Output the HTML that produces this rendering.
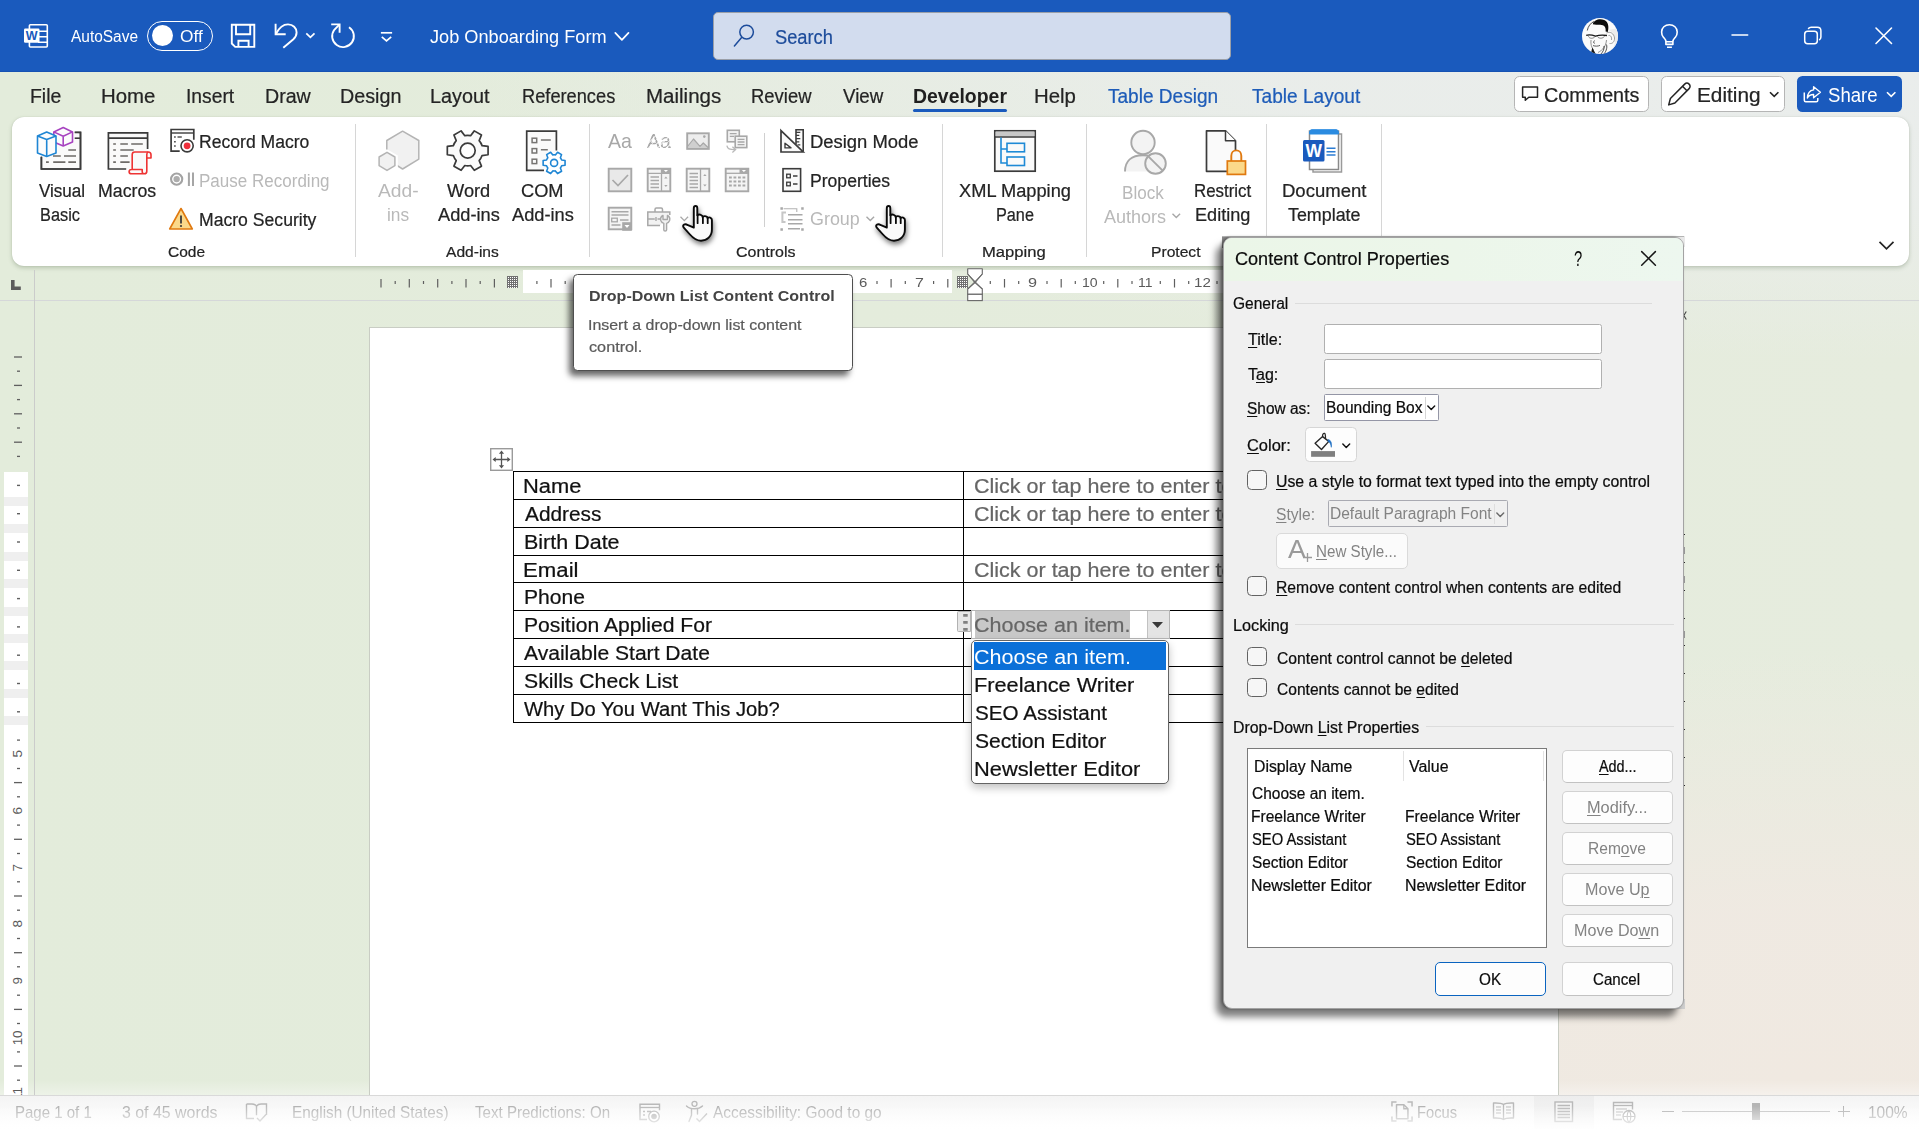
<!DOCTYPE html><html lang="en"><head><meta charset="utf-8"><title>Job Onboarding Form - Word</title><style>
html,body{margin:0;padding:0;}
body{width:1919px;height:1129px;overflow:hidden;position:relative;
 font-family:"Liberation Sans",sans-serif;background:#e4ecdc;}
#root{position:absolute;left:0;top:0;width:1919px;height:1129px;overflow:hidden;}
#root div,#root svg,#root span.t{position:absolute;}
#root div{box-sizing:border-box;}
span.t{white-space:nowrap;transform-origin:0 50%;-webkit-text-stroke:0.22px currentColor;}
u{text-decoration:underline;text-decoration-thickness:1px;text-underline-offset:1.5px;}
</style></head><body><div id="root">
<div style="left:0;top:0;width:1919px;height:1129px;background:linear-gradient(180deg,rgba(255,255,255,0) 0,rgba(255,255,255,0) 1080px,rgba(255,255,255,0.380) 1096px),radial-gradient(ellipse 1500px 300px at 1919px 60px,rgba(234,237,236,1) 0%,rgba(234,237,236,0.85) 45%,rgba(234,237,236,0) 100%),radial-gradient(ellipse 800px 430px at 1800px 1080px,#f0e9e1 0%,rgba(240,233,226,0.9) 40%,rgba(240,233,226,0) 100%),linear-gradient(90deg,#e3ecdb 0%,#e4ecdc 45%,#e6ecde 100%);"></div>
<div style="left:0px;top:0px;width:1919px;height:72px;background:#1a5abd;"></div>
<div style="left:0px;top:71px;width:1919px;height:1px;background:#1652b3;"></div>
<svg style="left:22px;top:22px;" width="30" height="30" viewBox="22 22 30 30" fill="none">
<rect x="29.400" y="24.800" width="17.900" height="22.200" rx="1" stroke="#fff" stroke-width="1.600"/>
<path d="M38 31.300H47.300M38 36.800H47.300M38 42.300H47.300" stroke="#fff" stroke-width="1.500"/>
<rect x="24" y="28.600" width="15.500" height="14.200" rx="1.200" fill="#fff"/>
<text x="31.750" y="40.200" font-family="Liberation Sans, sans-serif" font-weight="700" font-size="12.500" text-anchor="middle" fill="#1a5abd">W</text>
</svg>
<span class="t" style="left:71.0px;top:26.00px;font-size:16px;line-height:21px;color:#fff;transform:scaleX(0.9655);-webkit-text-stroke:0;">AutoSave</span>
<div style="left:146.8px;top:20.9px;width:66.4px;height:30.1px;border:1.500px solid #fff;border-radius:15.100px;"></div>
<div style="left:151.7px;top:24.8px;width:21.4px;height:21.4px;background:#fff;border-radius:50%;"></div>
<span class="t" style="left:180.19px;top:26.00px;font-size:16px;line-height:21px;color:#fff;transform:scaleX(1.0810);-webkit-text-stroke:0;">Off</span>
<svg style="left:228px;top:20px;" width="32" height="32" viewBox="228 20 32 32" fill="none">
<path d="M231.800 24.800H254.300V46.900H235.200L231.800 43.500z" stroke="#fff" stroke-width="1.900" stroke-linejoin="miter"/>
<path d="M236 24.800V34.200H250.200V24.800" stroke="#fff" stroke-width="1.900"/>
<path d="M238.400 46.900V40.700H248.600V46.900" stroke="#fff" stroke-width="1.900"/>
</svg>
<svg style="left:270px;top:18px;" width="32" height="34" viewBox="270 18 32 34" fill="none">
<path d="M275.600 23.800V34.200H285.700" stroke="#fff" stroke-width="1.900" fill="none"/>
<path d="M276 33.800C279 28 283.500 24.400 288 24.400c5 0 8.600 3.600 8.600 8.100 0 3-1.400 5.100-3.500 7L283.300 47.800" stroke="#fff" stroke-width="1.900" fill="none"/>
</svg>
<svg style="left:303px;top:30px;" width="15" height="11" viewBox="303 30 15 11" fill="none"><path d="M306.300 33.300l4.100 4.100 4.100-4.100" stroke="#fff" stroke-width="1.700" fill="none"/></svg>
<svg style="left:326px;top:18px;" width="34" height="34" viewBox="326 18 34 34" fill="none">
<path d="M331.200 24.400H339.600V32.800" stroke="#fff" stroke-width="1.900" fill="none"/>
<path d="M339.300 24.700L334.300 29.800A10.850 10.850 0 1 0 349 27.200" stroke="#fff" stroke-width="1.900" fill="none"/>
</svg>
<svg style="left:377px;top:28px;" width="19" height="17" viewBox="377 28 19 17" fill="none"><path d="M380.900 32.800H392.100" stroke="#fff" stroke-width="1.700"/><path d="M381.800 36.800l4.700 4 4.700-4" stroke="#fff" stroke-width="1.700" fill="none"/></svg>
<span class="t" style="left:429.52px;top:24.00px;font-size:19px;line-height:25px;color:#fff;transform:scaleX(0.9557);-webkit-text-stroke:0;">Job Onboarding Form</span>
<svg style="left:612px;top:29px;" width="20" height="16" viewBox="612 29 20 16" fill="none"><path d="M615.300 32.800L621.900 39.800L628.500 32.800" stroke="#fff" stroke-width="1.700" fill="none" stroke-linecap="round" stroke-linejoin="round"/></svg>
<div style="left:713px;top:12px;width:518px;height:48px;background:#d2dcee;border:1px solid #9a9fa8;border-radius:5px;"></div>
<svg style="left:731px;top:22px;" width="27" height="28" viewBox="731 22 27 28" fill="none"><circle cx="746.600" cy="32.100" r="6.800" stroke="#1d4c9b" stroke-width="1.500"/><path d="M741.800 37.200L734.400 46" stroke="#1d4c9b" stroke-width="1.500" stroke-linecap="round"/></svg>
<span class="t" style="left:775.33px;top:25.00px;font-size:19.5px;line-height:25px;color:#1d4c9b;transform:scaleX(0.9371);">Search</span>
<svg style="left:1580px;top:16px;" width="40" height="40" viewBox="1580 16 40 40" fill="none">
<defs><clipPath id="av"><circle cx="1600" cy="36.100" r="18"/></clipPath></defs>
<circle cx="1600" cy="36.100" r="18" fill="#fbfbfb"/>
<g clip-path="url(#av)">
<path d="M1608 30C1612 31 1615.500 35 1615 42C1614.500 47 1611 51 1607 54L1619 50V28z" fill="#ececec"/>
<path d="M1592.800 24.300C1593.800 19.600 1600 18.300 1604.200 20C1608.200 21.700 1609.200 26.500 1607.800 32L1605.600 31.400C1606.200 27.200 1604.200 24.800 1600.200 24.700C1597.200 24.600 1595 25 1592.800 24.300z" fill="#0c0c0c"/>
<path d="M1587.300 30.500C1588 26.500 1590.500 23 1594 21.500" stroke="#222" stroke-width="0.800" fill="none"/>
<path d="M1586.200 35.300C1589 34.300 1592 34.800 1595.500 36.200C1599 35 1603 34.900 1607 35.500" stroke="#1a1a1a" stroke-width="1.300" fill="none"/>
<path d="M1588.500 36.300C1589 38.600 1593 39 1594.800 36.800M1597.500 36.500C1598.500 38.800 1603 38.800 1604.500 36.300" stroke="#555" stroke-width="0.700" fill="none"/>
<path d="M1606.500 33C1610 31 1614 33.500 1614.500 38C1614.800 41.500 1612.500 44 1609.500 43.500M1608.500 35.500C1610.500 35 1612 37 1611.500 40" stroke="#777" stroke-width="0.700" fill="none"/>
<path d="M1594.500 40.500C1593.500 42 1593 43 1594.800 43.300M1593 45.600C1595.500 46.400 1598 46.300 1600 45.400" stroke="#333" stroke-width="0.800" fill="none"/>
<path d="M1606.500 40C1606 46 1603 50 1598 52.500M1591 40C1590.500 44 1591.500 47.500 1593.500 50" stroke="#666" stroke-width="0.700" fill="none"/>
<path d="M1592.300 47.500L1596 54.500L1591 53z" fill="#151515"/>
<path d="M1606.500 44.500C1607.500 48 1606 52 1603 55M1604 46C1604.500 49 1603 52 1600.500 54.500" stroke="#222" stroke-width="0.800" fill="none"/>
</g>
</svg>
<svg style="left:1657px;top:21px;" width="25" height="30" viewBox="1657 21 25 30" fill="none">
<path d="M1665.900 44.400V41.500C1665.900 39.500 1664.600 38.600 1663.400 37.200C1662 35.600 1661.600 33.800 1661.600 31.900C1661.600 27.800 1665 24.700 1669.400 24.700C1673.800 24.700 1677.200 27.800 1677.200 31.900C1677.200 33.800 1676.800 35.600 1675.400 37.200C1674.200 38.600 1672.900 39.500 1672.900 41.500V44.400z" stroke="#fff" stroke-width="1.600" stroke-linejoin="round"/>
<path d="M1665.900 41.700H1672.900M1667 47.300H1671.900" stroke="#fff" stroke-width="1.500"/>
</svg>
<svg style="left:1730.2px;top:30px;" width="20" height="10" viewBox="0 0 20 10" fill="none"><path d="M2 5h15.700" stroke="#fff" stroke-width="1.5" stroke-linecap="round"/></svg>
<svg style="left:1801.5px;top:24.9px;" width="22" height="22" viewBox="0 0 22 22" fill="none"><rect x="2.700" y="6.200" width="12.600" height="12.600" rx="3" stroke="#fff" stroke-width="1.500"/><path d="M6.500 3.500c.700-1 1.600-1.300 2.600-1.300h6.200c2.200 0 3.600 1.500 3.600 3.600V12c0 1.100-.400 2-1.300 2.600" stroke="#fff" stroke-width="1.500" stroke-linecap="round" fill="none"/></svg>
<svg style="left:1873.4px;top:25.2px;" width="22" height="22" viewBox="0 0 22 22" fill="none"><path d="M3 3l15.500 15.500M18.500 3L3 18.500" stroke="#fff" stroke-width="1.600" stroke-linecap="round"/></svg>
<span class="t" style="left:30.23px;top:84.00px;font-size:19.5px;line-height:25px;color:#242424;transform:scaleX(0.9963);">File</span>
<span class="t" style="left:100.91px;top:84.00px;font-size:19.5px;line-height:25px;color:#242424;transform:scaleX(1.0462);">Home</span>
<span class="t" style="left:185.99px;top:84.00px;font-size:19.5px;line-height:25px;color:#242424;transform:scaleX(0.9881);">Insert</span>
<span class="t" style="left:264.72px;top:84.00px;font-size:19.5px;line-height:25px;color:#242424;transform:scaleX(1.0064);">Draw</span>
<span class="t" style="left:340.21px;top:84.00px;font-size:19.5px;line-height:25px;color:#242424;transform:scaleX(1.0115);">Design</span>
<span class="t" style="left:429.7px;top:84.00px;font-size:19.5px;line-height:25px;color:#242424;transform:scaleX(1.0159);">Layout</span>
<span class="t" style="left:522.33px;top:84.00px;font-size:19.5px;line-height:25px;color:#242424;transform:scaleX(0.9351);">References</span>
<span class="t" style="left:645.9px;top:84.00px;font-size:19.5px;line-height:25px;color:#242424;transform:scaleX(1.0520);">Mailings</span>
<span class="t" style="left:751.06px;top:84.00px;font-size:19.5px;line-height:25px;color:#242424;transform:scaleX(0.9457);">Review</span>
<span class="t" style="left:843.25px;top:84.00px;font-size:19.5px;line-height:25px;color:#242424;transform:scaleX(0.9608);">View</span>
<span class="t" style="left:912.54px;top:84.00px;font-size:19.5px;line-height:25px;color:#1f1f1f;font-weight:700;-webkit-text-stroke:0;transform:scaleX(0.9968);">Developer</span>
<div style="left:913px;top:108.5px;width:94px;height:3px;background:#1a5abd;border-radius:1.500px;"></div>
<span class="t" style="left:1033.91px;top:84.00px;font-size:19.5px;line-height:25px;color:#242424;transform:scaleX(1.0452);">Help</span>
<span class="t" style="left:1108.45px;top:84.00px;font-size:19.5px;line-height:25px;color:#1e5cb8;transform:scaleX(0.9768);">Table Design</span>
<span class="t" style="left:1252.2px;top:84.00px;font-size:19.5px;line-height:25px;color:#1e5cb8;transform:scaleX(0.9788);">Table Layout</span>
<div style="left:1514.2px;top:76px;width:134.5px;height:35.8px;background:#fff;border:1px solid #b5b5b5;border-radius:5.500px;"></div>
<svg style="left:1519px;top:83px;" width="23" height="21" viewBox="1519 83 23 21" fill="none"><path d="M1522.600 87H1537.500V97.200H1528.800L1525.300 100.300V97.200H1522.600z" stroke="#242424" stroke-width="1.500" stroke-linejoin="round"/></svg>
<span class="t" style="left:1544.47px;top:83.00px;font-size:19.5px;line-height:25px;color:#242424;transform:scaleX(1.0124);">Comments</span>
<div style="left:1661px;top:76px;width:124.2px;height:35.8px;background:#fff;border:1px solid #b5b5b5;border-radius:5.500px;"></div>
<svg style="left:1665px;top:79px;" width="30" height="30" viewBox="1665 79 30 30" fill="none"><path d="M1668.700 104.900L1670.400 98.500L1684.700 84.100C1685.900 82.900 1687.900 82.900 1689.100 84.100C1690.400 85.400 1690.400 87.300 1689.100 88.600L1674.900 103z" stroke="#242424" stroke-width="1.500" stroke-linejoin="round"/><path d="M1682.500 86.300L1687 90.800" stroke="#242424" stroke-width="1.500"/></svg>
<span class="t" style="left:1697.08px;top:83.00px;font-size:19.5px;line-height:25px;color:#242424;transform:scaleX(1.0666);">Editing</span>
<svg style="left:1767px;top:89px;" width="15" height="11" viewBox="1767 89 15 11" fill="none"><path d="M1770 92.200l4.200 4.200 4.200-4.200" stroke="#242424" stroke-width="1.600" fill="none"/></svg>
<div style="left:1797px;top:76px;width:104.8px;height:35.8px;background:#1a5abd;border-radius:5.500px;"></div>
<svg style="left:1801px;top:83px;" width="23" height="22" viewBox="1801 83 23 22" fill="none"><path d="M1804.300 92.500V100.300Q1804.300 101.800 1805.800 101.800H1816.300Q1817.800 101.800 1817.800 100.300V98" stroke="#fff" stroke-width="1.500" fill="none"/><path d="M1813.600 86.700L1820.400 92.200L1813.600 97.700V94.500C1810.600 94.500 1808.600 95.600 1807.400 98C1807.600 93.600 1809.900 90.400 1813.600 89.900z" stroke="#fff" stroke-width="1.400" stroke-linejoin="round"/></svg>
<span class="t" style="left:1828.02px;top:83.00px;font-size:19.5px;line-height:25px;color:#fff;transform:scaleX(0.9519);-webkit-text-stroke:0;">Share</span>
<svg style="left:1884px;top:89px;" width="15" height="11" viewBox="1884 89 15 11" fill="none"><path d="M1887 92.200l4.200 4.200 4.200-4.200" stroke="#fff" stroke-width="1.600" fill="none"/></svg>
<div style="left:12px;top:117px;width:1896.5px;height:149px;background:#fff;border-radius:12px;box-shadow:0 2px 4px rgba(80,100,70,0.28),0 0 1px rgba(80,100,70,0.25);"></div>
<svg style="left:34px;top:124px;" width="52" height="50" viewBox="34 124 52 50" fill="none">
<path d="M74.700 132.400H80.500V169H41.400V156.500" stroke="#3b3b3b" stroke-width="1.500" fill="#fafafa"/>
<path d="M41.400 156.500L56 150V132.400H80.500" stroke="none" fill="#fafafa"/>
<path d="M74.700 132.400H80.500V169H41.400V156.900" stroke="#3b3b3b" stroke-width="1.700" fill="none"/>
<path d="M74.700 138.200H80.500" stroke="#3b3b3b" stroke-width="1.600"/>
<path d="M68.300 150H76M53 156H60.800M64 156H76M46 162.100H48.800M53.200 162.100H65.400M68.300 162.100H76" stroke="#6e6b68" stroke-width="1.700"/>
<path d="M63.200 127.600L72.500 131.900V142L63.200 145.900L53.800 142V131.900z" fill="#fcfcfc" stroke="#a743c0" stroke-width="1.600" stroke-linejoin="round"/>
<path d="M53.800 131.900L63.200 136.300L72.500 131.900M63.200 136.300V145.900" stroke="#a743c0" stroke-width="1.600" stroke-linejoin="round" fill="none"/>
<path d="M46.700 132L56 136.100V153L46.700 156.400L37.500 153V136.100z" fill="#fcfcfc" stroke="#1f86d4" stroke-width="1.600" stroke-linejoin="round"/>
<path d="M37.500 136.100L46.700 139.400L56 136.100M46.700 139.400V156.400" stroke="#1f86d4" stroke-width="1.600" stroke-linejoin="round" fill="none"/>
</svg>
<span class="t" style="left:38.5px;top:180.00px;font-size:18px;line-height:23px;color:#242424;transform:scaleX(0.9471);">Visual</span>
<span class="t" style="left:40.32px;top:204.00px;font-size:18px;line-height:23px;color:#242424;transform:scaleX(0.9072);">Basic</span>
<svg style="left:104px;top:128px;" width="52" height="50" viewBox="104 128 52 50" fill="none">
<rect x="108.400" y="132.800" width="39.200" height="36.200" fill="#fafafa" stroke="none"/>
<path d="M126.200 169H108.400V132.800H147.600V149.100" stroke="#3b3b3b" stroke-width="1.700" fill="none"/>
<path d="M108.400 138.200H147.600" stroke="#3b3b3b" stroke-width="1.700"/>
<path d="M113.200 144H115.900M120.300 144H127.900M131.200 144H142.800M113.200 150H115.900M120.300 150H133.700M113.200 156H115.900M120.300 156H127.900M113.200 162.100H115.900M120.300 162.100H129.600" stroke="#6e6b68" stroke-width="1.700"/>
<path d="M132.200 169.500V154.600C132.200 152.900 133.200 152 134.800 152H148.200C150 152 151 153 151 154.800V158H146.800" fill="#fafafa" stroke="none"/>
<path d="M132.200 169.500V154.600C132.200 152.900 133.200 152 134.800 152H148.200C150 152 151 153 151 154.800V158H146.800V171.200C146.800 172.900 145.800 173.800 144.300 173.800H131.600C130 173.800 129.100 172.900 129.100 171.700C129.100 170.400 130 169.500 131.600 169.500H142.200V171.500C142.200 173 143.200 173.800 144.300 173.800" fill="#fafafa" stroke="#ee3333" stroke-width="1.600" stroke-linejoin="round"/>
<path d="M146.800 158V154.500C146.800 153 147.300 152.300 148.200 152" stroke="#ee3333" stroke-width="1.600" fill="none"/>
</svg>
<span class="t" style="left:98.41px;top:180.00px;font-size:18px;line-height:23px;color:#242424;transform:scaleX(0.9853);">Macros</span>
<svg style="left:169px;top:127px;" width="27" height="27" viewBox="0 0 27 27" fill="none">
<path d="M10.700 24.100H2.100V2.500h22.700V12.700" stroke="#3b3b3b" stroke-width="1.700" fill="none"/>
<path d="M2.100 6h22.700" stroke="#3b3b3b" stroke-width="1.400"/>
<path d="M5 10h1.800M8.500 10h4.300M5 14.800h1.800M5 19h1.800" stroke="#555" stroke-width="1.500"/>
<circle cx="18.100" cy="18.800" r="6.100" fill="#fff" stroke="#3b3b3b" stroke-width="1.600"/>
<circle cx="18.100" cy="18.800" r="3.400" fill="#ee2f3c"/>
</svg>
<span class="t" style="left:199.33px;top:131.00px;font-size:18px;line-height:23px;color:#242424;transform:scaleX(0.9766);">Record Macro</span>
<svg style="left:168px;top:170px;" width="28" height="18" viewBox="168 170 28 18" fill="none">
<circle cx="176.650" cy="179.100" r="5.600" stroke="#a3a3a3" stroke-width="2.100"/>
<circle cx="176.650" cy="179.100" r="3.200" fill="#adadad"/>
<path d="M188.900 172.600V185.900M193 172.600V185.900" stroke="#a6a6a6" stroke-width="2"/>
</svg>
<span class="t" style="left:199.37px;top:170.00px;font-size:18px;line-height:23px;color:#b9b9b9;transform:scaleX(0.9457);-webkit-text-stroke:0;">Pause Recording</span>
<svg style="left:168px;top:206px;" width="26" height="25" viewBox="0 0 26 25" fill="none">
<path d="M13 2.500L24.300 23H1.700z" fill="#fbd98a" stroke="#e0790f" stroke-width="1.600" stroke-linejoin="round"/>
<path d="M13 9.500v8" stroke="#3b3b3b" stroke-width="1.800"/>
<circle cx="13" cy="20" r="1.100" fill="#3b3b3b"/>
</svg>
<span class="t" style="left:199.32px;top:209.00px;font-size:18px;line-height:23px;color:#242424;transform:scaleX(0.9779);">Macro Security</span>
<span class="t" style="left:167.55px;top:242.00px;font-size:15.5px;line-height:20px;color:#242424;transform:scaleX(1.0022);">Code</span>
<div style="left:355px;top:124px;width:1px;height:133px;background:#d6d6d6;"></div>
<svg style="left:374px;top:126px;" width="50" height="50" viewBox="374 126 50 50" fill="none">
<path d="M402.600 131.200L418.800 140.500V159.200L402.600 169L386.800 159.200V140.500z" fill="#f1f1f1" stroke="#b4b4b4" stroke-width="1.500" stroke-linejoin="round"/>
<path d="M387 150.100L397.100 155.900V166.800L387 172.600L376.900 166.800V155.900z" fill="#fff" stroke="#fff" stroke-width="1.500"/>
<path d="M387 152.300L394.900 157V165.700L387 170.400L379.100 165.700V157z" fill="#f1f1f1" stroke="#b4b4b4" stroke-width="1.500" stroke-linejoin="round"/>
</svg>
<span class="t" style="left:378.0px;top:180.00px;font-size:18px;line-height:23px;color:#b9b9b9;transform:scaleX(1.0703);-webkit-text-stroke:0;">Add-</span>
<span class="t" style="left:387.42px;top:204.00px;font-size:18px;line-height:23px;color:#b9b9b9;transform:scaleX(0.9614);-webkit-text-stroke:0;">ins</span>
<svg style="left:444px;top:126px;" width="48" height="50" viewBox="444 126 48 50" fill="none"><path d="M482.07 145.65L488.08 146.45L488.08 154.75L482.07 155.55A15.2 15.2 0 0 1 479.17 160.57L481.48 166.18L474.30 170.33L470.60 165.52A15.2 15.2 0 0 1 464.80 165.52L461.10 170.33L453.92 166.18L456.23 160.57A15.2 15.2 0 0 1 453.33 155.55L447.32 154.75L447.32 146.45L453.33 145.65A15.2 15.2 0 0 1 456.23 140.63L453.92 135.02L461.10 130.87L464.80 135.68A15.2 15.2 0 0 1 470.60 135.68L474.30 130.87L481.48 135.02L479.17 140.63A15.2 15.2 0 0 1 482.07 145.65z" fill="#fafafa" stroke="#3b3b3b" stroke-width="1.7" stroke-linejoin="round"/><circle cx="467.7" cy="150.6" r="7.5" fill="#fff" stroke="#3b3b3b" stroke-width="1.7"/></svg>
<span class="t" style="left:446.6px;top:180.00px;font-size:18px;line-height:23px;color:#242424;transform:scaleX(1.0127);">Word</span>
<span class="t" style="left:437.8px;top:204.00px;font-size:18px;line-height:23px;color:#242424;transform:scaleX(1.0121);">Add-ins</span>
<svg style="left:522px;top:126px;" width="48" height="52" viewBox="522 126 48 52" fill="none">
<path d="M556.400 150.600V131.200H526.700V170.400H544" stroke="#3b3b3b" stroke-width="1.700" fill="#fafafa"/>
<rect x="532.100" y="138.200" width="4.600" height="4.400" stroke="#767472" stroke-width="1.500"/>
<rect x="532.100" y="148.600" width="4.600" height="4.400" stroke="#767472" stroke-width="1.500"/>
<rect x="532.100" y="159.200" width="4.600" height="4.400" stroke="#767472" stroke-width="1.500"/>
<path d="M540.900 139.900H550.800M540.900 149.800H547.800" stroke="#767472" stroke-width="1.500"/>
<path d="M561.66 160.00L565.06 160.57L565.06 165.23L561.66 165.80A8.1 8.1 0 0 1 560.39 168.00L561.59 171.22L557.56 173.55L555.37 170.90A8.1 8.1 0 0 1 552.83 170.90L550.64 173.55L546.61 171.22L547.81 168.00A8.1 8.1 0 0 1 546.54 165.80L543.14 165.23L543.14 160.57L546.54 160.00A8.1 8.1 0 0 1 547.81 157.80L546.61 154.58L550.64 152.25L552.83 154.90A8.1 8.1 0 0 1 555.37 154.90L557.56 152.25L561.59 154.58L560.39 157.80A8.1 8.1 0 0 1 561.66 160.00z" fill="#fff" stroke="#1f86d4" stroke-width="1.6" stroke-linejoin="round"/><circle cx="554.1" cy="162.9" r="3.5" fill="#fff" stroke="#1f86d4" stroke-width="1.6"/></svg>
<span class="t" style="left:521.15px;top:180.00px;font-size:18px;line-height:23px;color:#242424;transform:scaleX(1.0116);">COM</span>
<span class="t" style="left:511.7px;top:204.00px;font-size:18px;line-height:23px;color:#242424;transform:scaleX(1.0137);">Add-ins</span>
<span class="t" style="left:445.7px;top:242.00px;font-size:15.5px;line-height:20px;color:#242424;transform:scaleX(1.0047);">Add-ins</span>
<div style="left:589px;top:124px;width:1px;height:133px;background:#d6d6d6;"></div>
<span class="t" style="left:608.4px;top:127.00px;font-size:20.8px;line-height:27px;color:#a8a8a8;transform:scaleX(0.9385);-webkit-text-stroke:0;">Aa</span>
<span class="t" style="left:647.0px;top:127.00px;font-size:20.8px;line-height:27px;color:#a8a8a8;transform:scaleX(0.9385);-webkit-text-stroke:0;">Aa</span>
<div style="left:646px;top:132px;width:26px;height:18px;background:repeating-linear-gradient(135deg,rgba(255,255,255,0) 0 2.200px,rgba(255,255,255,0.600) 2.200px 3.300px);"></div>
<svg style="left:684px;top:130px;" width="28" height="22" viewBox="684 130 28 22" fill="none">
<rect x="687.200" y="133.300" width="21.600" height="15.600" fill="#ededed" stroke="#a8a8a8" stroke-width="1.900"/>
<path d="M687.500 146.500L693.500 139L700 146.300L703.300 143L708.300 147.700V148.500H687.500z" fill="#cfcfcf" stroke="#a8a8a8" stroke-width="1.200" stroke-linejoin="round"/>
<circle cx="704.300" cy="136.600" r="1.300" fill="#a8a8a8"/>
</svg>
<svg style="left:723px;top:126px;" width="29" height="30" viewBox="723 126 29 30" fill="none">
<rect x="727.300" y="130.300" width="12" height="11.500" fill="#f2f2f2" stroke="#a8a8a8" stroke-width="1.600"/>
<path d="M729.800 133.600H736.600M729.800 136.400H734" stroke="#a8a8a8" stroke-width="1.300"/>
<rect x="735.200" y="136.200" width="11.600" height="11.400" fill="#f2f2f2" stroke="#a8a8a8" stroke-width="1.600"/>
<path d="M737.600 139.300H744.500M737.600 142H744.500M737.600 144.700H744.500" stroke="#a8a8a8" stroke-width="1.300"/>
<path d="M726.900 145.600C727.400 148.900 729.500 149.600 735 149.600M732.400 146.800L735.600 149.600L732.400 152.400" stroke="#b9b9b9" stroke-width="1.300" fill="none"/>
</svg>
<svg style="left:607px;top:167px;" width="26" height="26" viewBox="0 0 26 26" fill="none">
<rect x="1.700" y="1.700" width="22.600" height="22.600" fill="#e9e9e9" stroke="#a8a8a8" stroke-width="1.900"/>
<path d="M5.500 13l5.500 5.500 10-10.500" stroke="#a8a8a8" stroke-width="1.700" fill="none"/>
</svg>
<svg style="left:646px;top:167px;" width="26" height="26" viewBox="0 0 26 26" fill="none">
<rect x="1.700" y="1.700" width="22.600" height="22.600" fill="#f4f4f4" stroke="#a8a8a8" stroke-width="1.900"/>
<path d="M1.700 6.300h22.600M15.500 1.700v22.600" stroke="#a8a8a8" stroke-width="1.300"/>
<rect x="15.500" y="1.700" width="8.800" height="4.600" fill="#a8a8a8"/>
<path d="M17.800 3l2.100 2 2.100-2z" fill="#fff"/>
<path d="M4.500 10h8.500M4.500 13.500h8.500M4.500 17h8.500M4.500 20.500h8.500" stroke="#a8a8a8" stroke-width="1.300"/>
<path d="M18.200 11.500l1.700-2 1.700 2zM18.200 18l1.700 2 1.700-2z" fill="#a8a8a8"/>
</svg>
<svg style="left:685px;top:167px;" width="26" height="26" viewBox="0 0 26 26" fill="none">
<rect x="1.700" y="1.700" width="22.600" height="22.600" fill="#f4f4f4" stroke="#a8a8a8" stroke-width="1.900"/>
<path d="M15.500 1.700v22.600" stroke="#a8a8a8" stroke-width="1.300"/>
<path d="M4.500 6.500h8.500M4.500 10h8.500M4.500 13.500h8.500M4.500 17h8.500M4.500 20.500h8.500" stroke="#a8a8a8" stroke-width="1.300"/>
<path d="M18.200 9l1.700-2 1.700 2zM18.200 17.500l1.700 2 1.700-2z" fill="#a8a8a8"/>
</svg>
<svg style="left:724px;top:167px;" width="26" height="26" viewBox="0 0 26 26" fill="none">
<rect x="1.700" y="1.700" width="22.600" height="22.600" fill="#f4f4f4" stroke="#a8a8a8" stroke-width="1.900"/>
<path d="M1.700 6.300h22.600" stroke="#a8a8a8" stroke-width="1.300"/>
<rect x="15.500" y="1.700" width="8.800" height="4.600" fill="#a8a8a8"/>
<path d="M17.800 3l2.100 2 2.100-2z" fill="#fff"/>
<path d="M5 10.500h16.500M5 14.500h16.500M5 18.500h16.500" stroke="#a8a8a8" stroke-width="2.200" stroke-dasharray="2.800 1.700"/>
</svg>
<svg style="left:607px;top:206px;" width="26" height="26" viewBox="0 0 26 26" fill="none">
<rect x="1.700" y="1.700" width="22.600" height="21.600" fill="#f4f4f4" stroke="#a8a8a8" stroke-width="1.900"/>
<path d="M4.500 5.800h17M4.500 9h17" stroke="#a8a8a8" stroke-width="1.400"/>
<rect x="4.700" y="12.200" width="5.600" height="3.600" stroke="#a8a8a8" stroke-width="1.300"/>
<path d="M13 14h8.500M4.500 19h9" stroke="#a8a8a8" stroke-width="1.400"/>
<rect x="15.200" y="16.200" width="9.600" height="8.600" fill="#a8a8a8"/>
<path d="M17.500 19l2.500 3 2.500-3z" fill="#fff"/>
</svg>
<svg style="left:646px;top:206px;" width="28" height="26" viewBox="0 0 28 26" fill="none">
<path d="M9 6V3.500c0-.800.600-1.400 1.400-1.400h4.700c.800 0 1.400.600 1.400 1.400V6" stroke="#a8a8a8" stroke-width="1.500" fill="none"/>
<path d="M14 19.500H1.800V6h22v3" stroke="#a8a8a8" stroke-width="1.500" fill="#f2f2f2"/>
<path d="M1.800 13h7M11.500 13h3.500M10 11v4" stroke="#a8a8a8" stroke-width="1.400"/>
<path d="M17 9.500c-2 1-2.800 3-2.200 5 .500 1.500 1.700 2.400 3 2.800V24c0 1.400 2.800 1.400 2.800 0v-6.700c1.400-.400 2.500-1.400 3-2.800.600-2-.200-4-2.200-5v4h-4.400z" fill="#f2f2f2" stroke="#a8a8a8" stroke-width="1.400" stroke-linejoin="round"/>
</svg>
<svg style="left:679px;top:215px;" width="11" height="8" viewBox="0 0 11 8" fill="none"><path d="M1.500 1.800l3.800 3.800 3.800-3.800" stroke="#a8a8a8" stroke-width="1.300" fill="none"/></svg>
<div style="left:764px;top:133px;width:1px;height:93.5px;background:#d0d0d0;"></div>
<svg style="left:778px;top:126px;" width="28" height="30" viewBox="778 126 28 30" fill="none">
<path d="M796 144.500V129.800H803.200V151.500" stroke="#3b3b3b" stroke-width="1.600" fill="#fafafa"/>
<path d="M781 130.600L803.200 152H781z" stroke="#3b3b3b" stroke-width="1.700" fill="#fafafa" stroke-linejoin="miter"/>
<path d="M785 143.300L791 147.900H785z" stroke="#3b3b3b" stroke-width="1.400" fill="#fff" stroke-linejoin="round"/>
<path d="M796 132.400H800.300M796 135.400H799.300M796 138.700H800.300M796 141.800H799.300M797.500 144.800H800.300" stroke="#3b3b3b" stroke-width="1.300"/>
</svg>
<span class="t" style="left:809.56px;top:131.00px;font-size:18px;line-height:23px;color:#242424;transform:scaleX(1.0238);">Design Mode</span>
<svg style="left:781px;top:167px;" width="22" height="26" viewBox="0 0 22 26" fill="none">
<rect x="2" y="1.700" width="17.600" height="22.600" stroke="#3b3b3b" stroke-width="1.600" fill="#fafafa"/>
<rect x="5.700" y="7.200" width="3.600" height="3.600" stroke="#3b3b3b" stroke-width="1.300"/>
<rect x="5.700" y="15.200" width="3.600" height="3.600" stroke="#3b3b3b" stroke-width="1.300"/>
<path d="M12 9h4.500M12 17h4.500" stroke="#3b3b3b" stroke-width="1.400"/>
</svg>
<span class="t" style="left:809.63px;top:170.00px;font-size:18px;line-height:23px;color:#242424;transform:scaleX(0.9767);">Properties</span>
<svg style="left:778px;top:205px;" width="28" height="28" viewBox="778 205 28 28" fill="none">
<path d="M780.400 207.300h2.500v2.500h-2.500zM801.200 207.300h2.500v2.500h-2.500zM780.400 228.200h2.500v2.500h-2.500zM801.200 228.200h2.500v2.500h-2.500z" fill="#a8a8a8"/>
<path d="M783.600 208.700H796.800V212" stroke="#b3b3b3" stroke-width="1.100" fill="none"/>
<path d="M786 212.600H782.400V222H785.500" stroke="#c6c6c6" stroke-width="2" fill="none"/>
<path d="M788 214.800H802.500M788 219.700H802.500M788 223.700H802.500M788 228.800H800" stroke="#a8a8a8" stroke-width="1.500"/>
</svg>
<span class="t" style="left:810.16px;top:208.00px;font-size:18px;line-height:23px;color:#b9b9b9;transform:scaleX(0.9948);-webkit-text-stroke:0;">Group</span>
<svg style="left:865px;top:214.7px;" width="11" height="8" viewBox="0 0 11 8" fill="none"><path d="M1.500 1.800l3.800 3.800 3.800-3.800" stroke="#a8a8a8" stroke-width="1.400" fill="none"/></svg>
<span class="t" style="left:735.53px;top:242.00px;font-size:15.5px;line-height:20px;color:#242424;transform:scaleX(1.0307);">Controls</span>
<div style="left:942px;top:124px;width:1px;height:133px;background:#d6d6d6;"></div>
<svg style="left:993px;top:129px;" width="44" height="44" viewBox="0 0 44 44" fill="none">
<rect x="1.800" y="1.800" width="40.400" height="40.400" fill="#fafafa" stroke="#3b3b3b" stroke-width="1.700"/>
<rect x="2.600" y="2.600" width="38.800" height="4.800" fill="#c8c8c8"/>
<path d="M1.800 8h40.400" stroke="#3b3b3b" stroke-width="1.400"/>
<path d="M8 8.500v25.500h6M8 20h6" stroke="#1e8ad6" stroke-width="1.600" fill="none"/>
<rect x="14" y="14.300" width="17.500" height="8.500" stroke="#1e8ad6" stroke-width="1.600"/>
<rect x="14" y="28" width="17.500" height="8.500" stroke="#1e8ad6" stroke-width="1.600"/>
</svg>
<span class="t" style="left:958.71px;top:180.00px;font-size:18px;line-height:23px;color:#242424;transform:scaleX(1.0140);">XML Mapping</span>
<span class="t" style="left:995.73px;top:204.00px;font-size:18px;line-height:23px;color:#242424;transform:scaleX(0.9022);">Pane</span>
<span class="t" style="left:982.16px;top:242.00px;font-size:15.5px;line-height:20px;color:#242424;transform:scaleX(1.0715);">Mapping</span>
<div style="left:1086px;top:124px;width:1px;height:133px;background:#d6d6d6;"></div>
<svg style="left:1122px;top:129px;" width="46" height="48" viewBox="0 0 46 48" fill="none">
<path d="M3 42.500C3 32 9.500 26.200 21 26.200S39 32 39 42.500z" fill="#f3f3f3" stroke="none"/>
<path d="M3 42.500C3 32 9.500 26.200 21 26.200c3 0 5.500.400 7.500 1.200" fill="none" stroke="#a8a8a8" stroke-width="1.900"/>
<circle cx="21" cy="13.500" r="11.700" fill="#f3f3f3" stroke="#a8a8a8" stroke-width="1.900"/>
<circle cx="33.500" cy="34.500" r="10.300" fill="#f3f3f3" stroke="#a8a8a8" stroke-width="1.900"/>
<path d="M26.300 27.300l14.400 14.400" stroke="#a8a8a8" stroke-width="1.900"/>
</svg>
<span class="t" style="left:1121.57px;top:182.00px;font-size:18px;line-height:23px;color:#b9b9b9;transform:scaleX(0.9489);-webkit-text-stroke:0;">Block</span>
<span class="t" style="left:1103.5px;top:206.00px;font-size:18px;line-height:23px;color:#b9b9b9;transform:scaleX(1.0005);-webkit-text-stroke:0;">Authors</span>
<svg style="left:1171px;top:212px;" width="11" height="8" viewBox="0 0 11 8" fill="none"><path d="M1.500 1.800l3.800 3.800 3.800-3.800" stroke="#a8a8a8" stroke-width="1.400" fill="none"/></svg>
<svg style="left:1203px;top:128px;" width="46" height="48" viewBox="0 0 46 48" fill="none">
<path d="M3.500 2.800h19l10 10V43.300H3.500z" fill="#fafafa" stroke="#3b3b3b" stroke-width="1.700" stroke-linejoin="round"/>
<path d="M22.500 2.800v10h10" stroke="#3b3b3b" stroke-width="1.500" fill="#fff" stroke-linejoin="round"/>
<path d="M28.300 33v-5.200c0-3.200 2.200-5.400 5-5.400s5 2.200 5 5.400V33" stroke="#e0790f" stroke-width="1.900" fill="#fafafa"/>
<rect x="24.300" y="33" width="18.200" height="13.400" fill="#fbd98a" stroke="#e0790f" stroke-width="1.700"/>
</svg>
<span class="t" style="left:1193.68px;top:180.00px;font-size:18px;line-height:23px;color:#242424;transform:scaleX(0.9386);">Restrict</span>
<span class="t" style="left:1194.58px;top:204.00px;font-size:18px;line-height:23px;color:#242424;transform:scaleX(1.0072);">Editing</span>
<span class="t" style="left:1150.54px;top:242.00px;font-size:15.5px;line-height:20px;color:#242424;transform:scaleX(1.0084);">Protect</span>
<div style="left:1266px;top:124px;width:1px;height:133px;background:#d6d6d6;"></div>
<svg style="left:1301.5px;top:128px;" width="46" height="46" viewBox="0 0 46 46" fill="none">
<rect x="11" y="6" width="28.500" height="38" fill="#fdfdfd" stroke="#9a9a9a" stroke-width="1.500"/>
<rect x="7.500" y="3" width="29" height="38.500" fill="#fff" stroke="#8a8a8a" stroke-width="1.500"/>
<path d="M7.500 6V4.200c0-1.500 1-2.500 2.500-2.500h24c1.500 0 2.500 1 2.500 2.500V6z" fill="#2b8be0" stroke="#2b8be0" stroke-width="1"/>
<path d="M24.500 20.300h9M24.500 23.700h9M24.500 27h9" stroke="#2b7cd3" stroke-width="1.400"/>
<rect x="1" y="12" width="21.500" height="21.500" rx="1.500" fill="#1a5abd"/>
<text x="11.750" y="29.300" font-family="Liberation Sans, sans-serif" font-weight="700" font-size="17.500" text-anchor="middle" fill="#fff">W</text>
</svg>
<span class="t" style="left:1281.55px;top:180.00px;font-size:18px;line-height:23px;color:#242424;transform:scaleX(1.0286);">Document</span>
<span class="t" style="left:1288.22px;top:204.00px;font-size:18px;line-height:23px;color:#242424;transform:scaleX(0.9927);">Template</span>
<div style="left:1381px;top:124px;width:1px;height:133px;background:#d6d6d6;"></div>
<svg style="left:1877px;top:239px;" width="19" height="13" viewBox="0 0 19 13" fill="none"><path d="M2.500 2.800l7 7 7-7" stroke="#242424" stroke-width="1.700" fill="none"/></svg>
<svg style="left:670px;top:196px;filter:drop-shadow(1.500px 3.500px 2.500px rgba(0,0,0,0.500));overflow:visible;" width="60" height="60" viewBox="670 196 60 60" fill="none"><g transform="translate(0 0)">
<path d="M693.800 227.600V208.200C693.800 206.600 694.600 206 695.600 206C696.600 206 697.300 206.600 697.300 208.200V215.300C698.300 214.500 699.800 214.500 700.800 214.900C702 215.300 702.600 216 702.600 216.900C703.500 216.100 705 216 706 216.300C707 216.600 707.500 217.100 707.500 217.900C708.500 217.300 709.800 217.300 710.500 217.800C711.600 218.400 711.900 219.100 711.900 220.100V229.500C711.900 236.300 707 240.700 701 240.700C696 240.700 692.500 237.500 689.500 234L684 227.800C682.800 226.400 682.800 225.200 684 224.600C685.200 224 686.500 224.300 688 225.200z" fill="#fafafa" stroke="#0a0a0a" stroke-width="1.900" stroke-linejoin="round"/>
<path d="M697.600 215V223.200M702.900 217V223.200M707.700 218V223.200" stroke="#0a0a0a" stroke-width="1.800" stroke-linecap="round"/>
</g></svg>
<svg style="left:863px;top:196px;filter:drop-shadow(1.500px 3.500px 2.500px rgba(0,0,0,0.500));overflow:visible;" width="60" height="60" viewBox="863 196 60 60" fill="none"><g transform="translate(193 0)">
<path d="M693.800 227.600V208.200C693.800 206.600 694.600 206 695.600 206C696.600 206 697.300 206.600 697.300 208.200V215.300C698.300 214.500 699.800 214.500 700.800 214.900C702 215.300 702.600 216 702.600 216.900C703.500 216.100 705 216 706 216.300C707 216.600 707.500 217.100 707.500 217.900C708.500 217.300 709.800 217.300 710.500 217.800C711.600 218.400 711.900 219.100 711.900 220.100V229.500C711.900 236.300 707 240.700 701 240.700C696 240.700 692.500 237.500 689.500 234L684 227.800C682.800 226.400 682.800 225.200 684 224.600C685.200 224 686.500 224.300 688 225.200z" fill="#fafafa" stroke="#0a0a0a" stroke-width="1.900" stroke-linejoin="round"/>
<path d="M697.600 215V223.200M702.900 217V223.200M707.700 218V223.200" stroke="#0a0a0a" stroke-width="1.800" stroke-linecap="round"/>
</g></svg>
<div style="left:523px;top:270px;width:429px;height:23px;background:#fff;"></div>
<div style="left:975px;top:270px;width:430px;height:23px;background:#fff;"></div>
<div style="left:0px;top:300px;width:1919px;height:1px;background:#d5d7d9;"></div>
<div style="left:34px;top:270px;width:1px;height:826px;background:#cbcccb;"></div>
<svg style="left:8px;top:277px;" width="16" height="16" viewBox="8 277 16 16" fill="none"><path d="M12.800 280V288.200H20.800" stroke="#5c5c5c" stroke-width="3.600" fill="none"/></svg>
<svg style="left:0;top:0" width="1919" height="320" fill="none"><path d="M508.5 281v3" stroke="#5f5f5f" stroke-width="1.200"/><path d="M494.4 279v8.500" stroke="#5f5f5f" stroke-width="1.200"/><path d="M480.2 281v3" stroke="#5f5f5f" stroke-width="1.200"/><path d="M466.0 279v8.500" stroke="#5f5f5f" stroke-width="1.200"/><path d="M451.9 281v3" stroke="#5f5f5f" stroke-width="1.200"/><path d="M437.7 279v8.500" stroke="#5f5f5f" stroke-width="1.200"/><path d="M423.5 281v3" stroke="#5f5f5f" stroke-width="1.200"/><path d="M409.3 279v8.500" stroke="#5f5f5f" stroke-width="1.200"/><path d="M395.2 281v3" stroke="#5f5f5f" stroke-width="1.200"/><path d="M381.0 279v8.500" stroke="#5f5f5f" stroke-width="1.200"/><path d="M536.9 281v3" stroke="#5f5f5f" stroke-width="1.200"/><path d="M551.0 279v8.500" stroke="#5f5f5f" stroke-width="1.200"/><path d="M565.2 281v3" stroke="#5f5f5f" stroke-width="1.200"/><path d="M877.0 281v3" stroke="#5f5f5f" stroke-width="1.200"/><path d="M891.1 279v8.500" stroke="#5f5f5f" stroke-width="1.200"/><path d="M905.3 281v3" stroke="#5f5f5f" stroke-width="1.200"/><path d="M933.6 281v3" stroke="#5f5f5f" stroke-width="1.200"/><path d="M947.8 279v8.500" stroke="#5f5f5f" stroke-width="1.200"/><path d="M990.3 281v3" stroke="#5f5f5f" stroke-width="1.200"/><path d="M1004.5 279v8.500" stroke="#5f5f5f" stroke-width="1.200"/><path d="M1018.7 281v3" stroke="#5f5f5f" stroke-width="1.200"/><path d="M1047.0 281v3" stroke="#5f5f5f" stroke-width="1.200"/><path d="M1061.2 279v8.500" stroke="#5f5f5f" stroke-width="1.200"/><path d="M1075.3 281v3" stroke="#5f5f5f" stroke-width="1.200"/><path d="M1103.7 281v3" stroke="#5f5f5f" stroke-width="1.200"/><path d="M1117.8 279v8.500" stroke="#5f5f5f" stroke-width="1.200"/><path d="M1132.0 281v3" stroke="#5f5f5f" stroke-width="1.200"/><path d="M1160.3 281v3" stroke="#5f5f5f" stroke-width="1.200"/><path d="M1174.5 279v8.500" stroke="#5f5f5f" stroke-width="1.200"/><path d="M1188.7 281v3" stroke="#5f5f5f" stroke-width="1.200"/><path d="M1217.0 281v3" stroke="#5f5f5f" stroke-width="1.200"/></svg>
<span class="t" style="left:858.51px;top:274.00px;font-size:13.5px;line-height:18px;color:#5a5a5a;transform:scaleX(1.1089);-webkit-text-stroke:0;">6</span>
<span class="t" style="left:914.89px;top:274.00px;font-size:13.5px;line-height:18px;color:#5a5a5a;transform:scaleX(1.1798);-webkit-text-stroke:0;">7</span>
<span class="t" style="left:1028.35px;top:274.00px;font-size:13.5px;line-height:18px;color:#5a5a5a;transform:scaleX(1.2000);-webkit-text-stroke:0;">9</span>
<span class="t" style="left:1081.86px;top:274.00px;font-size:13.5px;line-height:18px;color:#5a5a5a;transform:scaleX(1.0438);-webkit-text-stroke:0;">10</span>
<span class="t" style="left:1138.37px;top:274.00px;font-size:13.5px;line-height:18px;color:#5a5a5a;transform:scaleX(1.0338);-webkit-text-stroke:0;">11</span>
<span class="t" style="left:1194.38px;top:274.00px;font-size:13.5px;line-height:18px;color:#5a5a5a;transform:scaleX(1.1208);-webkit-text-stroke:0;">12</span>
<div style="left:507px;top:275.5px;width:11px;height:12.5px;background-color:#fff;background-image:linear-gradient(#707070 1px,transparent 1px),linear-gradient(90deg,#707070 1px,transparent 1px);background-size:2px 2px;"></div>
<div style="left:957px;top:275.5px;width:11px;height:12.5px;background-color:#fff;background-image:linear-gradient(#707070 1px,transparent 1px),linear-gradient(90deg,#707070 1px,transparent 1px);background-size:2px 2px;"></div>
<svg style="left:966px;top:267px;" width="18" height="35" viewBox="0 0 18 35" fill="none">
<path d="M1.700 1.700h14.600v5.300L9 15.600l7.300 6.400v5.300H1.700v-5.300L9 15.600 1.700 7z" fill="#fff" stroke="#666" stroke-width="1.100" stroke-linejoin="round"/>
<path d="M1.700 7L16.300 22M16.300 7L1.700 22" stroke="#666" stroke-width="1"/>
<rect x="1.700" y="27.300" width="14.600" height="6.300" fill="#fff" stroke="#666" stroke-width="1.100"/>
</svg>
<div style="left:4px;top:472px;width:24px;height:624px;background:#fff;"></div>
<div style="left:4px;top:497.0px;width:24px;height:9px;background:#efefef;"></div>
<div style="left:4px;top:524.4px;width:24px;height:9px;background:#efefef;"></div>
<div style="left:4px;top:551.8px;width:24px;height:9px;background:#efefef;"></div>
<div style="left:4px;top:579.2px;width:24px;height:9px;background:#efefef;"></div>
<div style="left:4px;top:606.6px;width:24px;height:9px;background:#efefef;"></div>
<div style="left:4px;top:634.0px;width:24px;height:9px;background:#efefef;"></div>
<div style="left:4px;top:661.4px;width:24px;height:9px;background:#efefef;"></div>
<div style="left:4px;top:688.8px;width:24px;height:9px;background:#efefef;"></div>
<div style="left:4px;top:716.2px;width:24px;height:9px;background:#efefef;"></div>
<svg style="left:0;top:0" width="40" height="1100" fill="none"><path d="M14 357.0h8" stroke="#5f5f5f" stroke-width="1.300"/><path d="M17 371.2h3" stroke="#5f5f5f" stroke-width="1.300"/><path d="M14 385.4h8" stroke="#5f5f5f" stroke-width="1.300"/><path d="M17 399.6h3" stroke="#5f5f5f" stroke-width="1.300"/><path d="M14 413.8h8" stroke="#5f5f5f" stroke-width="1.300"/><path d="M17 428.0h3" stroke="#5f5f5f" stroke-width="1.300"/><path d="M14 442.2h8" stroke="#5f5f5f" stroke-width="1.300"/><path d="M17 456.4h3" stroke="#5f5f5f" stroke-width="1.300"/><path d="M17 485.4h3" stroke="#5f5f5f" stroke-width="1.400"/><path d="M17 513.7h3" stroke="#5f5f5f" stroke-width="1.400"/><path d="M17 542.0h3" stroke="#5f5f5f" stroke-width="1.400"/><path d="M17 570.3h3" stroke="#5f5f5f" stroke-width="1.400"/><path d="M17 598.6h3" stroke="#5f5f5f" stroke-width="1.400"/><path d="M17 626.9h3" stroke="#5f5f5f" stroke-width="1.400"/><path d="M17 655.2h3" stroke="#5f5f5f" stroke-width="1.400"/><path d="M17 683.5h3" stroke="#5f5f5f" stroke-width="1.400"/><path d="M17 711.8h3" stroke="#5f5f5f" stroke-width="1.400"/><path d="M17 740.1h3" stroke="#5f5f5f" stroke-width="1.300"/><path d="M17 768.5h3" stroke="#5f5f5f" stroke-width="1.300"/><path d="M14 782.6h8" stroke="#5f5f5f" stroke-width="1.300"/><path d="M17 796.8h3" stroke="#5f5f5f" stroke-width="1.300"/><path d="M17 825.1h3" stroke="#5f5f5f" stroke-width="1.300"/><path d="M14 839.3h8" stroke="#5f5f5f" stroke-width="1.300"/><path d="M17 853.5h3" stroke="#5f5f5f" stroke-width="1.300"/><path d="M17 881.8h3" stroke="#5f5f5f" stroke-width="1.300"/><path d="M14 896.0h8" stroke="#5f5f5f" stroke-width="1.300"/><path d="M17 910.2h3" stroke="#5f5f5f" stroke-width="1.300"/><path d="M17 938.5h3" stroke="#5f5f5f" stroke-width="1.300"/><path d="M14 952.7h8" stroke="#5f5f5f" stroke-width="1.300"/><path d="M17 966.8h3" stroke="#5f5f5f" stroke-width="1.300"/><path d="M17 995.2h3" stroke="#5f5f5f" stroke-width="1.300"/><path d="M14 1009.4h8" stroke="#5f5f5f" stroke-width="1.300"/><path d="M17 1023.5h3" stroke="#5f5f5f" stroke-width="1.300"/><path d="M17 1051.9h3" stroke="#5f5f5f" stroke-width="1.300"/><path d="M14 1066.0h8" stroke="#5f5f5f" stroke-width="1.300"/><path d="M17 1080.2h3" stroke="#5f5f5f" stroke-width="1.300"/></svg>
<span class="t" style="left:12.9px;top:745.3px;width:9.2px;height:18px;line-height:18px;font-size:13.500px;color:#5a5a5a;text-align:center;transform:rotate(-90deg);transform-origin:50% 50%;letter-spacing:-0.300px;-webkit-text-stroke:0;">5</span>
<span class="t" style="left:12.9px;top:802.0px;width:9.2px;height:18px;line-height:18px;font-size:13.500px;color:#5a5a5a;text-align:center;transform:rotate(-90deg);transform-origin:50% 50%;letter-spacing:-0.300px;-webkit-text-stroke:0;">6</span>
<span class="t" style="left:12.9px;top:858.7px;width:9.2px;height:18px;line-height:18px;font-size:13.500px;color:#5a5a5a;text-align:center;transform:rotate(-90deg);transform-origin:50% 50%;letter-spacing:-0.300px;-webkit-text-stroke:0;">7</span>
<span class="t" style="left:12.9px;top:915.3px;width:9.2px;height:18px;line-height:18px;font-size:13.500px;color:#5a5a5a;text-align:center;transform:rotate(-90deg);transform-origin:50% 50%;letter-spacing:-0.300px;-webkit-text-stroke:0;">8</span>
<span class="t" style="left:12.9px;top:972.0px;width:9.2px;height:18px;line-height:18px;font-size:13.500px;color:#5a5a5a;text-align:center;transform:rotate(-90deg);transform-origin:50% 50%;letter-spacing:-0.300px;-webkit-text-stroke:0;">9</span>
<span class="t" style="left:8.8px;top:1028.7px;width:17.5px;height:18px;line-height:18px;font-size:13.500px;color:#5a5a5a;text-align:center;transform:rotate(-90deg);transform-origin:50% 50%;letter-spacing:-0.300px;-webkit-text-stroke:0;">10</span>
<span class="t" style="left:8.8px;top:1085.4px;width:17.5px;height:18px;line-height:18px;font-size:13.500px;color:#5a5a5a;text-align:center;transform:rotate(-90deg);transform-origin:50% 50%;letter-spacing:-0.300px;-webkit-text-stroke:0;">11</span>
<div style="left:369px;top:327px;width:1190px;height:769px;background:#fff;border-left:1px solid #c9cdc4;border-top:1px solid #c9cdc4;border-right:1px solid #c9cdc4;"></div>
<svg style="left:490px;top:448px;" width="23" height="23" viewBox="0 0 23 23" fill="none">
<rect x="0.700" y="0.700" width="21.600" height="21.600" fill="#fff" stroke="#9a9a9a" stroke-width="1.400"/>
<path d="M11.500 4v15M4 11.500h15" stroke="#555" stroke-width="1.300"/>
<path d="M11.500 2.500l-2.600 3.200h5.200zM11.500 20.500l-2.600-3.200h5.200zM2.500 11.500l3.200-2.600v5.200zM20.500 11.500l-3.200-2.600v5.200z" fill="#555"/>
</svg>
<div style="left:513px;top:470.75px;width:720px;height:1.5px;background:#000;"></div>
<div style="left:513px;top:498.75px;width:720px;height:1.5px;background:#000;"></div>
<div style="left:513px;top:526.75px;width:720px;height:1.5px;background:#000;"></div>
<div style="left:513px;top:554.75px;width:720px;height:1.5px;background:#000;"></div>
<div style="left:513px;top:581.75px;width:720px;height:1.5px;background:#000;"></div>
<div style="left:513px;top:609.75px;width:720px;height:1.5px;background:#000;"></div>
<div style="left:513px;top:637.75px;width:720px;height:1.5px;background:#000;"></div>
<div style="left:513px;top:665.75px;width:720px;height:1.5px;background:#000;"></div>
<div style="left:513px;top:693.75px;width:720px;height:1.5px;background:#000;"></div>
<div style="left:513px;top:721.75px;width:720px;height:1.5px;background:#000;"></div>
<div style="left:512.75px;top:471px;width:1.5px;height:252px;background:#000;"></div>
<div style="left:962.75px;top:471px;width:1.5px;height:252px;background:#000;"></div>
<span class="t" style="left:523.49px;top:473.00px;font-size:20px;line-height:26px;color:#111;transform:scaleX(1.0946);">Name</span>
<span class="t" style="left:524.7px;top:501.00px;font-size:20px;line-height:26px;color:#111;transform:scaleX(1.0406);">Address</span>
<span class="t" style="left:523.52px;top:529.00px;font-size:20px;line-height:26px;color:#111;transform:scaleX(1.0745);">Birth Date</span>
<span class="t" style="left:523.47px;top:557.00px;font-size:20px;line-height:26px;color:#111;transform:scaleX(1.1097);">Email</span>
<span class="t" style="left:523.55px;top:584.00px;font-size:20px;line-height:26px;color:#111;transform:scaleX(1.0548);">Phone</span>
<span class="t" style="left:523.55px;top:612.00px;font-size:20px;line-height:26px;color:#111;transform:scaleX(1.0568);">Position Applied For</span>
<span class="t" style="left:524.4px;top:640.00px;font-size:20px;line-height:26px;color:#111;transform:scaleX(1.0536);">Available Start Date</span>
<span class="t" style="left:523.74px;top:668.00px;font-size:20px;line-height:26px;color:#111;transform:scaleX(1.0590);">Skills Check List</span>
<span class="t" style="left:523.9px;top:696.00px;font-size:20px;line-height:26px;color:#111;transform:scaleX(1.0087);">Why Do You Want This Job?</span>
<span class="t" style="left:974.49px;top:473.00px;font-size:20px;line-height:26px;color:#666;transform:scaleX(1.0751);">Click or tap here to enter text.</span>
<span class="t" style="left:974.49px;top:501.00px;font-size:20px;line-height:26px;color:#666;transform:scaleX(1.0751);">Click or tap here to enter text.</span>
<span class="t" style="left:974.49px;top:557.00px;font-size:20px;line-height:26px;color:#666;transform:scaleX(1.0751);">Click or tap here to enter text.</span>
<div style="left:971px;top:610.2px;width:198.5px;height:28.6px;border:1px solid #b5b5b5;background:#fff;"></div>
<div style="left:974.5px;top:610.9px;width:155.5px;height:26.7px;background:#c8c8c8;"></div>
<span class="t" style="left:974.49px;top:612.00px;font-size:20px;line-height:26px;color:#666;transform:scaleX(1.0742);">Choose an item.</span>
<div style="left:1147.3px;top:610.9px;width:21.8px;height:27.5px;background:#e4e4e4;border-left:1px solid #c2c2c2;"></div>
<svg style="left:1151px;top:621px;" width="13" height="8" viewBox="0 0 13 8" fill="none"><path d="M1 1h11L6.500 7z" fill="#3a3a3a"/></svg>
<div style="left:957.1px;top:610.9px;width:14.2px;height:21.6px;background:#e6e6e6;border:1px solid #b2b2b2;border-radius:1.500px 0 0 1.500px;"></div>
<svg style="left:958px;top:611px;" width="13" height="22" viewBox="958 611 13 22" fill="none"><path d="M963.200 615.400h4.500M963.200 622.400h4.500M963.200 629.400h4.500" stroke="#808080" stroke-width="2.800"/></svg>
<div style="left:971.3px;top:640.3px;width:197.7px;height:143.8px;background:#fff;border:1.800px solid #646464;border-radius:5px;box-shadow:0 4px 8px rgba(0,0,0,0.240);"></div>
<div style="left:974.2px;top:642.3px;width:191.8px;height:27.3px;background:#0b70d8;"></div>
<span class="t" style="left:974.49px;top:644.00px;font-size:20px;line-height:26px;color:#fff;transform:scaleX(1.0777);-webkit-text-stroke:0;">Choose an item.</span>
<span class="t" style="left:973.8px;top:672.00px;font-size:20px;line-height:26px;color:#111;transform:scaleX(1.0872);">Freelance Writer</span>
<span class="t" style="left:974.85px;top:700.00px;font-size:20px;line-height:26px;color:#111;transform:scaleX(1.0321);">SEO Assistant</span>
<span class="t" style="left:974.84px;top:728.00px;font-size:20px;line-height:26px;color:#111;transform:scaleX(1.0542);">Section Editor</span>
<span class="t" style="left:973.79px;top:756.00px;font-size:20px;line-height:26px;color:#111;transform:scaleX(1.0922);">Newsletter Editor</span>
<div style="left:573px;top:274.3px;width:279.6px;height:96.5px;background:#fff;border:1.400px solid #4f4f4f;border-radius:4.500px;box-shadow:-4px 5px 6px rgba(0,0,0,0.600);"></div>
<span class="t" style="left:588.67px;top:286.00px;font-size:15.5px;line-height:20px;color:#444;font-weight:700;-webkit-text-stroke:0;transform:scaleX(1.0341);">Drop-Down List Content Control</span>
<span class="t" style="left:588.29px;top:315.00px;font-size:15.5px;line-height:20px;color:#5a5a5a;transform:scaleX(1.0281);">Insert a drop-down list content</span>
<span class="t" style="left:589.05px;top:337.00px;font-size:15.5px;line-height:20px;color:#5a5a5a;transform:scaleX(1.0464);">control.</span>
<div style="left:1674px;top:236px;width:11px;height:11px;background:#e9e9e9;"></div>
<div style="left:1222px;top:236px;width:12px;height:12px;background:#8c8c8c;"></div>
<div style="left:1222px;top:235.8px;width:462px;height:1.6px;background:#b4b4b4;"></div>
<div style="left:1672px;top:999px;width:13px;height:10px;background:#cfcfcf;"></div>
<div style="left:1683px;top:533.5px;width:2.3px;height:1.1px;background:#2a2a2a;"></div>
<div style="left:1683px;top:561.5px;width:2.3px;height:1.1px;background:#2a2a2a;"></div>
<div style="left:1683px;top:589.5px;width:2.3px;height:1.1px;background:#2a2a2a;"></div>
<div style="left:1683px;top:617.5px;width:2.3px;height:1.1px;background:#2a2a2a;"></div>
<div style="left:1683px;top:644.5px;width:2.3px;height:1.1px;background:#2a2a2a;"></div>
<div style="left:1683px;top:673.0px;width:2.3px;height:1.1px;background:#2a2a2a;"></div>
<div style="left:1683px;top:701.0px;width:2.3px;height:1.1px;background:#2a2a2a;"></div>
<div style="left:1683px;top:729.0px;width:2.3px;height:1.1px;background:#2a2a2a;"></div>
<div style="left:1683px;top:756.5px;width:2.3px;height:1.1px;background:#2a2a2a;"></div>
<div style="left:1683px;top:785.0px;width:2.3px;height:1.1px;background:#2a2a2a;"></div>
<div style="left:1684px;top:547px;width:1px;height:7px;background:#9a9a9a;"></div>
<div style="left:1684px;top:575.5px;width:1px;height:7px;background:#9a9a9a;"></div>
<div style="left:1684px;top:631px;width:1px;height:7px;background:#9a9a9a;"></div>
<svg style="left:1683px;top:309px;" width="7" height="14" viewBox="1683 309 7 14" fill="none"><path d="M1686.300 311.500l-2.500 4 2.500 4" stroke="#444" stroke-width="1.100" fill="none"/></svg>
<div style="left:1223px;top:237px;width:461px;height:772px;background:#f0f0f0;border:1px solid #a3a3a3;border-radius:9px;box-shadow:-7px 8px 7px rgba(0,0,0,0.50),-2px 0 3px rgba(0,0,0,0.35);overflow:hidden;"><div style="left:0;top:0;width:461px;height:43px;background:linear-gradient(90deg,#ebf6e8 0%,#ecf6ea 50%,#edf7ef 100%);"></div></div>
<span class="t" style="left:1235.15px;top:246.00px;font-size:19px;line-height:25px;color:#0c0c0c;transform:scaleX(0.9521);">Content Control Properties</span>
<span class="t" style="left:1574.44px;top:244.00px;font-size:22.5px;line-height:29px;color:#0c0c0c;transform:scaleX(0.6578);-webkit-text-stroke:0;">?</span>
<svg style="left:1638px;top:248px;" width="22" height="22" viewBox="1638 248 22 22" fill="none"><path d="M1641.700 251.600L1655.400 265.300M1655.400 251.600L1641.700 265.300" stroke="#161616" stroke-width="1.500" stroke-linecap="round"/></svg>
<span class="t" style="left:1233.27px;top:293.00px;font-size:16px;line-height:21px;color:#0c0c0c;transform:scaleX(0.9707);">General</span>
<div style="left:1295px;top:302.5px;width:357px;height:1px;background:#dcdcdc;"></div>
<span class="t" style="left:1247.69px;top:329.00px;font-size:16px;line-height:21px;color:#0c0c0c;transform:scaleX(1.0056);"><u>T</u>itle:</span>
<div style="left:1324px;top:324px;width:278px;height:29.5px;background:#fff;border:1px solid #b0b0b0;border-radius:2.500px;"></div>
<span class="t" style="left:1247.69px;top:364.00px;font-size:16px;line-height:21px;color:#0c0c0c;transform:scaleX(1.0005);">T<u>a</u>g:</span>
<div style="left:1324px;top:359px;width:278px;height:29.5px;background:#fff;border:1px solid #b0b0b0;border-radius:2.500px;"></div>
<span class="t" style="left:1247.34px;top:398.00px;font-size:16px;line-height:21px;color:#0c0c0c;transform:scaleX(0.9658);"><u>S</u>how as:</span>
<div style="left:1324px;top:394px;width:114.8px;height:26.6px;background:#fff;border:1px solid #9496a6;border-radius:1.500px;"></div>
<span class="t" style="left:1326.23px;top:397.00px;font-size:16px;line-height:21px;color:#0c0c0c;transform:scaleX(0.9675);">Bounding Box</span>
<div style="left:1425px;top:396.5px;width:1px;height:22px;background:#d6d6d6;"></div>
<svg style="left:1427.2px;top:404.6px;width:8.500px;height:6px;" width="10" height="7" viewBox="0 0 10 7" fill="none"><path d="M1 1.200l4 4 4-4" stroke="#111" stroke-width="1.700" fill="none" stroke-linecap="round" stroke-linejoin="round"/></svg>
<span class="t" style="left:1247.17px;top:435.00px;font-size:16px;line-height:21px;color:#0c0c0c;transform:scaleX(1.0267);"><u>C</u>olor:</span>
<div style="left:1305.3px;top:427.2px;width:52.2px;height:35.2px;background:#fdfdfd;border:1px solid #d6d6d6;border-radius:4.500px;"></div>
<svg style="left:1308px;top:429px;" width="32" height="31" viewBox="1308 429 32 31" fill="none">
<path d="M1322.600 436.700C1322.300 434.300 1323.400 433 1324.600 433.400C1325.700 433.800 1325.500 436.500 1325.500 441" stroke="#262626" stroke-width="1.300" fill="none"/>
<path d="M1322.600 436.600L1328.800 441.400L1321.500 449.500L1315.100 443.300z" stroke="#262626" stroke-width="1.400" fill="#fdfdfd" stroke-linejoin="round"/>
<path d="M1328.300 439.400C1331.200 440.300 1332 443.500 1331.300 447.300C1330.800 444 1329.800 442 1327.800 441.300z" fill="#1e6fc2" stroke="#1e6fc2" stroke-width="0.600"/>
<rect x="1311.100" y="451.100" width="23.900" height="5.700" fill="#7f7f7f"/>
</svg>
<svg style="left:1342px;top:442.8px;width:8.500px;height:6px;" width="10" height="7" viewBox="0 0 10 7" fill="none"><path d="M1 1.200l4 4 4-4" stroke="#111" stroke-width="1.700" fill="none" stroke-linecap="round" stroke-linejoin="round"/></svg>
<div style="left:1247px;top:470.3px;width:19.9px;height:19.6px;background:#f6f6f6;border:1.400px solid #626262;border-radius:4.500px;"></div>
<span class="t" style="left:1276.33px;top:471.00px;font-size:16px;line-height:21px;color:#0c0c0c;transform:scaleX(0.9895);"><u>U</u>se a style to format text typed into the empty control</span>
<span class="t" style="left:1275.58px;top:504.00px;font-size:16px;line-height:21px;color:#838383;transform:scaleX(0.9767);-webkit-text-stroke:0;"><u>S</u>tyle:</span>
<div style="left:1328px;top:500px;width:179.6px;height:26.6px;background:#f0f0f0;border:1px solid #a9aab2;border-radius:1.500px;"></div>
<span class="t" style="left:1330.47px;top:503.00px;font-size:16px;line-height:21px;color:#838383;transform:scaleX(0.9716);-webkit-text-stroke:0;">Default Paragraph Font</span>
<div style="left:1494.25px;top:503.5px;width:1px;height:20.5px;background:#dedede;"></div>
<svg style="left:1496.2px;top:511.5px;width:8.500px;height:6px;" width="10" height="7" viewBox="0 0 10 7" fill="none"><path d="M1 1.200l4 4 4-4" stroke="#6a6a6a" stroke-width="1.700" fill="none" stroke-linecap="round" stroke-linejoin="round"/></svg>
<div style="left:1276.25px;top:533.25px;width:131.25px;height:35.25px;background:#fbfbfb;border:1px solid #dadada;border-radius:5px;"></div>
<span class="t" style="left:1288.0px;top:533.00px;font-size:25px;line-height:32px;color:#9a9a9a;transform:scaleX(1.0716);-webkit-text-stroke:0;">A</span>
<svg style="left:1301.5px;top:552px;" width="11" height="11" viewBox="0 0 11 11" fill="none"><path d="M5.500 1v9M1 5.500h9" stroke="#9a9a9a" stroke-width="1.300"/></svg>
<span class="t" style="left:1315.51px;top:541.00px;font-size:16px;line-height:21px;color:#838383;transform:scaleX(0.9473);-webkit-text-stroke:0;"><u>N</u>ew Style...</span>
<div style="left:1247px;top:576.05px;width:19.9px;height:19.6px;background:#f6f6f6;border:1.400px solid #626262;border-radius:4.500px;"></div>
<span class="t" style="left:1276.21px;top:577.00px;font-size:16px;line-height:21px;color:#0c0c0c;transform:scaleX(0.9804);"><u>R</u>emove content control when contents are edited</span>
<span class="t" style="left:1232.67px;top:615.00px;font-size:16px;line-height:21px;color:#0c0c0c;transform:scaleX(1.0130);">Locking</span>
<div style="left:1295px;top:624.25px;width:378.75px;height:1px;background:#dcdcdc;"></div>
<div style="left:1247px;top:646.8px;width:19.9px;height:19.6px;background:#f6f6f6;border:1.400px solid #626262;border-radius:4.500px;"></div>
<span class="t" style="left:1276.7px;top:648.00px;font-size:16px;line-height:21px;color:#0c0c0c;transform:scaleX(0.9808);">Content control cannot be <u>d</u>eleted</span>
<div style="left:1247px;top:677.8px;width:19.9px;height:19.6px;background:#f6f6f6;border:1.400px solid #626262;border-radius:4.500px;"></div>
<span class="t" style="left:1276.71px;top:679.00px;font-size:16px;line-height:21px;color:#0c0c0c;transform:scaleX(0.9731);">Contents cannot be <u>e</u>dited</span>
<span class="t" style="left:1232.7px;top:717.00px;font-size:16px;line-height:21px;color:#0c0c0c;transform:scaleX(0.9919);">Drop-Down <u>L</u>ist Properties</span>
<div style="left:1426.25px;top:725.75px;width:247.5px;height:1px;background:#dcdcdc;"></div>
<div style="left:1247px;top:748px;width:300px;height:199.5px;background:#fff;border:1px solid #7a7a7a;"></div>
<div style="left:1403.25px;top:751px;width:1px;height:29.5px;background:#e3e3e3;"></div>
<div style="left:1543px;top:751px;width:1px;height:29.5px;background:#e3e3e3;"></div>
<span class="t" style="left:1254.21px;top:756.00px;font-size:16px;line-height:21px;color:#0c0c0c;transform:scaleX(0.9865);">Display Name</span>
<span class="t" style="left:1408.69px;top:756.00px;font-size:16px;line-height:21px;color:#0c0c0c;transform:scaleX(0.9946);">Value</span>
<span class="t" style="left:1251.71px;top:783.00px;font-size:16px;line-height:21px;color:#0c0c0c;transform:scaleX(0.9672);">Choose an item.</span>
<span class="t" style="left:1251.22px;top:806.00px;font-size:16px;line-height:21px;color:#0c0c0c;transform:scaleX(0.9731);">Freelance Writer</span>
<span class="t" style="left:1404.97px;top:806.00px;font-size:16px;line-height:21px;color:#0c0c0c;transform:scaleX(0.9774);">Freelance Writer</span>
<span class="t" style="left:1251.87px;top:829.00px;font-size:16px;line-height:21px;color:#0c0c0c;transform:scaleX(0.9229);">SEO Assistant</span>
<span class="t" style="left:1405.62px;top:829.00px;font-size:16px;line-height:21px;color:#0c0c0c;transform:scaleX(0.9229);">SEO Assistant</span>
<span class="t" style="left:1251.84px;top:852.00px;font-size:16px;line-height:21px;color:#0c0c0c;transform:scaleX(0.9629);">Section Editor</span>
<span class="t" style="left:1405.58px;top:852.00px;font-size:16px;line-height:21px;color:#0c0c0c;transform:scaleX(0.9680);">Section Editor</span>
<span class="t" style="left:1251.2px;top:875.00px;font-size:16px;line-height:21px;color:#0c0c0c;transform:scaleX(0.9917);">Newsletter Editor</span>
<span class="t" style="left:1404.95px;top:875.00px;font-size:16px;line-height:21px;color:#0c0c0c;transform:scaleX(0.9938);">Newsletter Editor</span>
<div style="left:1562px;top:749.5px;width:110.5px;height:33px;background:#fdfdfd;border:1px solid #d2d2d2;border-bottom-color:#c2c2c2;border-radius:5px;"></div>
<span class="t" style="left:1599.25px;top:756.00px;font-size:16px;line-height:21px;color:#0c0c0c;transform:scaleX(0.8982);"><u>A</u>dd...</span>
<div style="left:1562px;top:790.5px;width:110.5px;height:33px;background:#fdfdfd;border:1px solid #d2d2d2;border-bottom-color:#c2c2c2;border-radius:5px;"></div>
<span class="t" style="left:1586.66px;top:797.00px;font-size:16px;line-height:21px;color:#838383;transform:scaleX(1.0218);-webkit-text-stroke:0;"><u>M</u>odify...</span>
<div style="left:1562px;top:831.5px;width:110.5px;height:33px;background:#fdfdfd;border:1px solid #d2d2d2;border-bottom-color:#c2c2c2;border-radius:5px;"></div>
<span class="t" style="left:1588.22px;top:838.00px;font-size:16px;line-height:21px;color:#838383;transform:scaleX(0.9730);-webkit-text-stroke:0;">Rem<u>o</u>ve</span>
<div style="left:1562px;top:872.5px;width:110.5px;height:33px;background:#fdfdfd;border:1px solid #d2d2d2;border-bottom-color:#c2c2c2;border-radius:5px;"></div>
<span class="t" style="left:1584.93px;top:879.00px;font-size:16px;line-height:21px;color:#838383;transform:scaleX(1.0070);-webkit-text-stroke:0;">Move U<u>p</u></span>
<div style="left:1562px;top:913.5px;width:110.5px;height:33px;background:#fdfdfd;border:1px solid #d2d2d2;border-bottom-color:#c2c2c2;border-radius:5px;"></div>
<span class="t" style="left:1574.18px;top:920.00px;font-size:16px;line-height:21px;color:#838383;transform:scaleX(1.0074);-webkit-text-stroke:0;">Move Do<u>w</u>n</span>
<div style="left:1435px;top:962px;width:110.5px;height:33.5px;background:#fdfdfd;border:1px solid #d2d2d2;border-bottom-color:#c2c2c2;border-radius:5px;border:1.500px solid #0a64c0;"></div>
<span class="t" style="left:1479.28px;top:969.00px;font-size:16px;line-height:21px;color:#0c0c0c;transform:scaleX(0.9574);">OK</span>
<div style="left:1562px;top:962px;width:110.5px;height:33.5px;background:#fdfdfd;border:1px solid #d2d2d2;border-bottom-color:#c2c2c2;border-radius:5px;"></div>
<span class="t" style="left:1593.48px;top:969.00px;font-size:16px;line-height:21px;color:#0c0c0c;transform:scaleX(0.9439);">Cancel</span>
<div style="left:0px;top:1095px;width:1919px;height:34px;background:linear-gradient(180deg,#f4f4f4 0%,#fbfbfb 60%,#ffffff 100%);border-top:1px solid #d9d9d9;"></div>
<span class="t" style="left:15.08px;top:1102.00px;font-size:16.5px;line-height:21px;color:#b3b3b3;transform:scaleX(0.9097);-webkit-text-stroke:0;">Page 1 of 1</span>
<span class="t" style="left:122.0px;top:1102.00px;font-size:16.5px;line-height:21px;color:#b3b3b3;transform:scaleX(0.9640);-webkit-text-stroke:0;">3 of 45 words</span>
<svg style="left:245px;top:1102px;" width="23" height="21" viewBox="0 0 23 21" fill="none">
<path d="M1.500 2h5.500c2 0 3.500.800 4.500 2.200C12.500 2.800 14 2 16 2h5.500v11" stroke="#b9b9b9" stroke-width="1.400" fill="none"/>
<path d="M1.500 2v14.500h7.500M11.500 4.200v9" stroke="#b9b9b9" stroke-width="1.400" fill="none"/>
<path d="M12 16l3 3 6-6.500" stroke="#b9b9b9" stroke-width="1.400" fill="none"/>
</svg>
<span class="t" style="left:291.8px;top:1102.00px;font-size:16.5px;line-height:21px;color:#b3b3b3;transform:scaleX(0.9274);-webkit-text-stroke:0;">English (United States)</span>
<span class="t" style="left:475.26px;top:1102.00px;font-size:16.5px;line-height:21px;color:#b3b3b3;transform:scaleX(0.9149);-webkit-text-stroke:0;">Text Predictions: On</span>
<svg style="left:638px;top:1102px;" width="24" height="21" viewBox="0 0 24 21" fill="none">
<path d="M9 17.500H2V2.200h19.500v6" stroke="#b9b9b9" stroke-width="1.400" fill="none"/>
<path d="M2 5.500h19.500" stroke="#b9b9b9" stroke-width="1.300"/>
<path d="M5 9.500h2M9 9.500h4M5 13h2" stroke="#b9b9b9" stroke-width="1.300"/>
<circle cx="16" cy="14.500" r="5.300" stroke="#b9b9b9" stroke-width="1.300" fill="#fff"/>
<circle cx="16" cy="14.500" r="2.800" fill="#b9b9b9"/>
</svg>
<svg style="left:685px;top:1100px;" width="25" height="23" viewBox="0 0 25 23" fill="none">
<circle cx="9.500" cy="3.800" r="2.500" stroke="#b9b9b9" stroke-width="1.300"/>
<path d="M1.500 6c2 2 4.500 2.800 8 2.800s6-.800 8-2.800" stroke="#b9b9b9" stroke-width="1.400" fill="none" stroke-linecap="round"/>
<path d="M6.500 9v6l-2.500 6.500M12.500 9v5" stroke="#b9b9b9" stroke-width="1.400" fill="none" stroke-linecap="round"/>
<path d="M11.500 18.500l3 3 7.500-8" stroke="#b9b9b9" stroke-width="1.400" fill="none"/>
</svg>
<span class="t" style="left:712.5px;top:1102.00px;font-size:16.5px;line-height:21px;color:#b3b3b3;transform:scaleX(0.9333);-webkit-text-stroke:0;">Accessibility: Good to go</span>
<svg style="left:1391px;top:1100.8px;width:22px;height:21px;" width="24" height="23" viewBox="0 0 24 23" fill="none">
<path d="M1 6V1h5M18 1h5v5M1 17v5h5M23 17v5h-5" stroke="#b9b9b9" stroke-width="1.600" fill="none"/>
<path d="M6 4h8l4.500 4.500V19.500H6z" stroke="#b9b9b9" stroke-width="1.600" fill="none" stroke-linejoin="round"/>
<path d="M14 4v4.500h4.500" stroke="#b9b9b9" stroke-width="1.400" fill="none"/>
</svg>
<span class="t" style="left:1416.85px;top:1102.00px;font-size:16.5px;line-height:21px;color:#b3b3b3;transform:scaleX(0.8904);-webkit-text-stroke:0;">Focus</span>
<svg style="left:1492px;top:1101px;" width="23" height="21" viewBox="0 0 23 21" fill="none">
<path d="M11.500 3.500C9.500 2 6 1.800 1.500 2v15c4.500-.200 8 0 10 1.500 2-1.500 5.500-1.700 10-1.500V2c-4.500-.200-8 0-10 1.500z" stroke="#b9b9b9" stroke-width="1.400" fill="none" stroke-linejoin="round"/>
<path d="M11.500 3.500v15" stroke="#b9b9b9" stroke-width="1.300"/>
<path d="M4 6h5M4 9h5M4 12h5M14 6h5M14 9h5M14 12h5" stroke="#b9b9b9" stroke-width="1.200"/>
</svg>
<div style="left:1534px;top:1096px;width:60px;height:33px;background:linear-gradient(180deg,#ededed,#f8f8f8);"></div>
<svg style="left:1554px;top:1101px;" width="20" height="22" viewBox="0 0 20 22" fill="none">
<rect x="1" y="1" width="17.500" height="19.500" stroke="#b9b9b9" stroke-width="1.400" fill="#f4f4f4"/>
<path d="M3.500 4.500h12.500M3.500 7.500h12.500M3.500 10.500h12.500M3.500 13.500h12.500M3.500 16.500h12.500" stroke="#b9b9b9" stroke-width="1.300"/>
</svg>
<svg style="left:1612px;top:1101px;" width="25" height="23" viewBox="0 0 25 23" fill="none">
<path d="M10 18.500H1.500V1.500h19v7" stroke="#b9b9b9" stroke-width="1.400" fill="none"/>
<path d="M1.500 4.500h19" stroke="#b9b9b9" stroke-width="1.300"/>
<path d="M4 8h11M4 11h7M4 14h5" stroke="#b9b9b9" stroke-width="1.200"/>
<circle cx="17" cy="15.500" r="6" stroke="#b9b9b9" stroke-width="1.300" fill="#fff"/>
<path d="M11 15.500h12M17 9.500c-2.500 3-2.500 9 0 12M17 9.500c2.500 3 2.500 9 0 12" stroke="#b9b9b9" stroke-width="1.100" fill="none"/>
</svg>
<div style="left:1661.5px;top:1110.5px;width:12px;height:1.3px;background:#b3b3b3;"></div>
<div style="left:1682px;top:1110.5px;width:148px;height:1.3px;background:#c4c4c4;"></div>
<div style="left:1752px;top:1102.5px;width:8px;height:17px;background:#b5b5b5;"></div>
<div style="left:1838px;top:1110.5px;width:11.5px;height:1.3px;background:#b3b3b3;"></div>
<div style="left:1843px;top:1105.5px;width:1.3px;height:11.5px;background:#b3b3b3;"></div>
<span class="t" style="left:1868.33px;top:1102.00px;font-size:16.5px;line-height:21px;color:#b3b3b3;transform:scaleX(0.9391);-webkit-text-stroke:0;">100%</span>
<div style="left:0px;top:1106px;width:1919px;height:23px;background:linear-gradient(180deg,rgba(255,255,255,0) 0%,rgba(255,255,255,0.550) 65%,rgba(255,255,255,0.850) 100%);"></div>
</div></body></html>
